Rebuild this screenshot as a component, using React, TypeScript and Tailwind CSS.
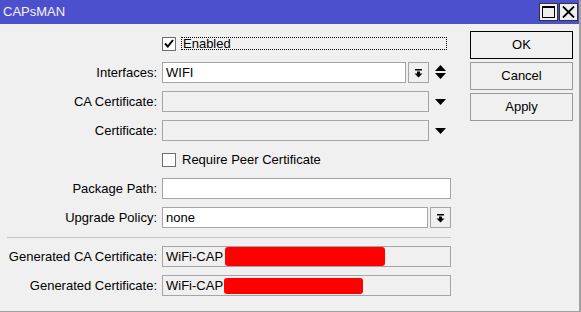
const font = { fontFamily: '"Liberation Sans", Arial, sans-serif' };

const DropIcon = () => (
  <svg width="9" height="10" viewBox="0 0 9 10">
    <path d="M1 1h7v1.5H1z M3 3.5h3v2H3z M0.5 5.5h8l-4 4z" fill="#000" />
  </svg>
);

const DownTri = () => (
  <svg width="11" height="6" viewBox="0 0 11 6">
    <path d="M0 0h11L5.5 6z" fill="#000" />
  </svg>
);

const UpDown = () => (
  <svg width="11" height="15" viewBox="0 0 11 15">
    <path d="M0 6h11L5.5 0z M0 8h11L5.5 14z" fill="#000" />
  </svg>
);

const Label = ({ text }: { text: string }) => (
  <div className="w-[157px] mr-[5px] text-right text-[13px] text-black leading-none">{text}</div>
);

const Field = ({ value, width, disabled }: { value?: string; width: string; disabled?: boolean }) => (
  <div
    className={`${width} h-[21px] border border-[#a5a5a5] flex items-center pl-[3px] text-[13px] text-black ${
      disabled ? "bg-[#f0f0f0]" : "bg-white"
    }`}
  >
    {value}
  </div>
);

const DropButton = () => (
  <div className="ml-[2px] w-[21px] h-[21px] border border-[#a5a5a5] bg-[#f0f0f0] flex items-center justify-center">
    <DropIcon />
  </div>
);

const Checkbox = ({ checked }: { checked?: boolean }) => (
  <div className="w-[14px] h-[14px] border border-[#6f6f6f] bg-white flex items-center justify-center">
    {checked && (
      <svg width="10" height="9" viewBox="0 0 10 9">
        <path d="M1 4.5l2.8 3L9 1" stroke="#000" strokeWidth="2" fill="none" />
      </svg>
    )}
  </div>
);

const Button = ({ text, primary }: { text: string; primary?: boolean }) => (
  <div
    className={`w-[103px] h-[28px] flex items-center justify-center text-[13px] text-black bg-[#f0f0f0] border ${
      primary ? "border-black" : "border-[#9a9a9a]"
    }`}
  >
    {text}
  </div>
);

export default function App() {
  return (
    <div className="w-[581px] h-[312px] bg-[#f0f0f0] border-r-2 border-b border-[#a0a0a0] flex flex-col" style={font}>
      <div className="h-[24px] bg-[#4c50cd] flex items-center pl-[3px] pr-[1px]">
        <span className="text-[13px] text-[#f4f4f4]">CAPsMAN</span>
        <div className="ml-auto flex gap-[1px] self-start mt-[3px]">
          <div className="w-[19px] h-[18px] bg-[#eeeeee] border border-[#333] flex items-center justify-center">
            <svg width="13" height="12" viewBox="0 0 13 12">
              <rect x="0.5" y="0.5" width="12" height="11" fill="none" stroke="#000" />
              <rect x="0" y="0" width="13" height="2" fill="#000" />
            </svg>
          </div>
          <div className="w-[19px] h-[18px] bg-[#eeeeee] border border-[#333] flex items-center justify-center">
            <svg width="13" height="12" viewBox="0 0 13 12">
              <path d="M1 0.5l11 11 M12 0.5l-11 11" stroke="#000" strokeWidth="1.8" />
            </svg>
          </div>
        </div>
      </div>

      <div className="flex flex-1">
        <div className="w-[451px] pt-[9px] flex flex-col">
          <div className="h-[21px] flex items-center pl-[162px]">
            <Checkbox checked />
            <div className="ml-[5px] w-[266px] h-[13px] border border-dotted border-black flex items-center pl-[1px] text-[13px] text-black">
              Enabled
            </div>
          </div>

          <div className="h-[21px] mt-[8px] flex items-center">
            <Label text="Interfaces:" />
            <Field value="WIFI" width="w-[244px]" />
            <DropButton />
            <div className="ml-[6px] flex items-center">
              <UpDown />
            </div>
          </div>

          <div className="h-[21px] mt-[8px] flex items-center">
            <Label text="CA Certificate:" />
            <Field width="w-[267px]" disabled />
            <div className="ml-[6px] flex items-center">
              <DownTri />
            </div>
          </div>

          <div className="h-[21px] mt-[8px] flex items-center">
            <Label text="Certificate:" />
            <Field width="w-[267px]" disabled />
            <div className="ml-[6px] flex items-center">
              <DownTri />
            </div>
          </div>

          <div className="h-[21px] mt-[8px] flex items-center pl-[162px]">
            <Checkbox />
            <span className="ml-[6px] text-[13px] text-black">Require Peer Certificate</span>
          </div>

          <div className="h-[21px] mt-[8px] flex items-center">
            <Label text="Package Path:" />
            <Field width="w-[289px]" />
          </div>

          <div className="h-[21px] mt-[8px] flex items-center">
            <Label text="Upgrade Policy:" />
            <Field value="none" width="w-[266px]" />
            <DropButton />
          </div>

          <div className="mt-[9px] ml-[7px] h-px bg-[#c4c4c4]" />

          <div className="h-[21px] mt-[8px] flex items-center">
            <Label text="Generated CA Certificate:" />
            <div className="w-[289px] h-[21px] border border-[#a5a5a5] bg-[#f0f0f0] flex items-center pl-[3px] text-[13px] text-black">
              WiFi-CAP
              <span className="ml-[2px] inline-block w-[160px] h-[19px] bg-[#ff0000] rounded-[3px]" />
            </div>
          </div>

          <div className="h-[21px] mt-[8px] flex items-center">
            <Label text="Generated Certificate:" />
            <div className="w-[289px] h-[21px] border border-[#a5a5a5] bg-[#f0f0f0] flex items-center pl-[3px] text-[13px] text-black">
              WiFi-CAP
              <span className="ml-[1px] inline-block w-[139px] h-[16px] bg-[#ff0000] rounded-[3px]" />
            </div>
          </div>
        </div>

        <div className="ml-[19px] pt-[7px] flex flex-col gap-[3px]">
          <Button text="OK" primary />
          <Button text="Cancel" />
          <Button text="Apply" />
        </div>
      </div>
    </div>
  );
}
